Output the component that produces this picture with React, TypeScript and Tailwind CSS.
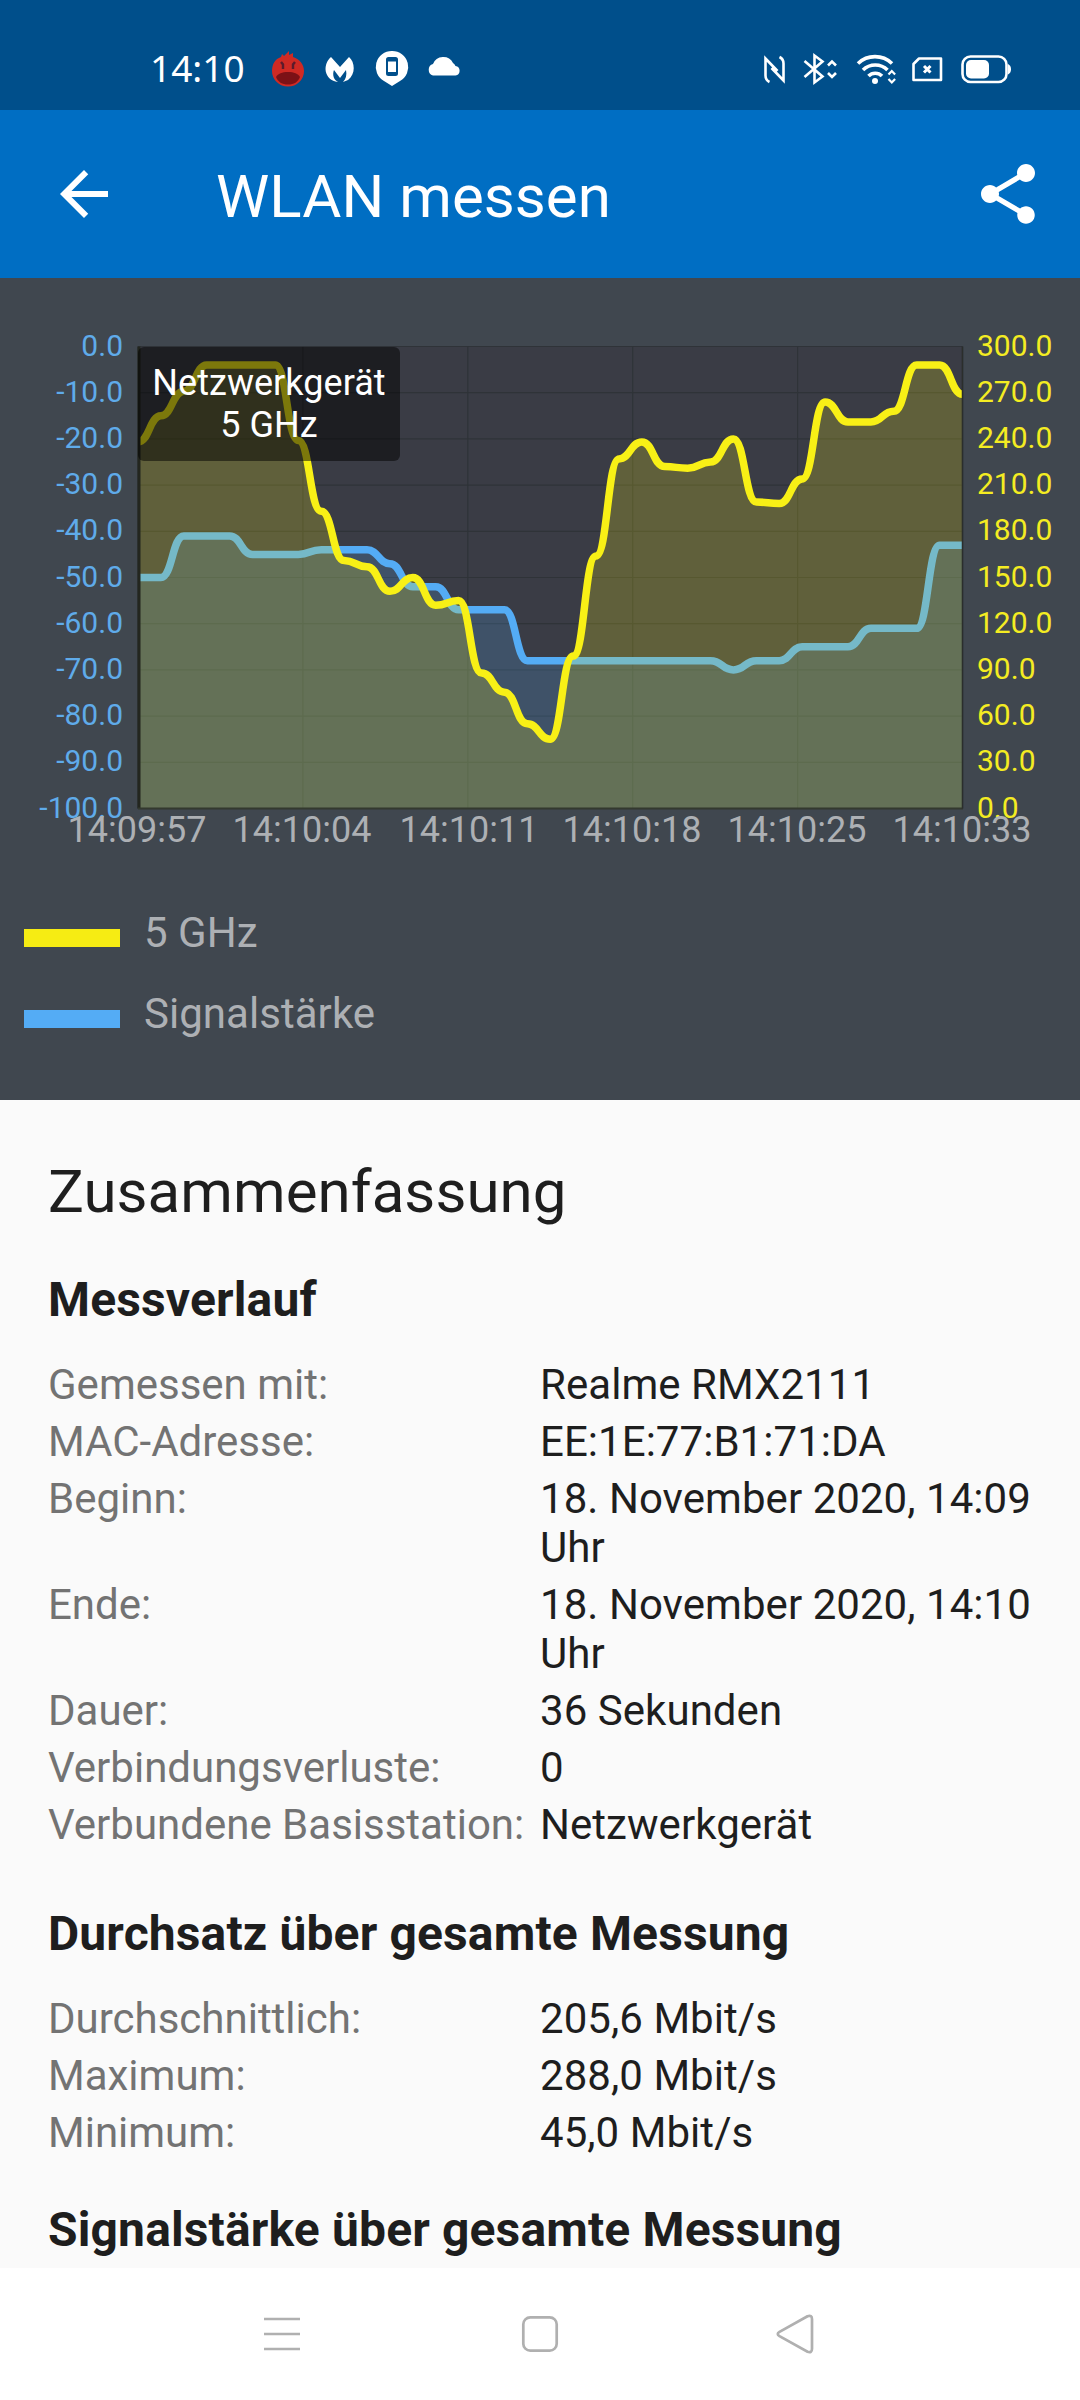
import { MdArrowBack, MdShare } from 'react-icons/md'

// one sample per second
const throughput = [
  238, 255, 271, 288, 288, 288, 288, 239, 193, 161, 157, 141, 150, 132, 135, 88, 75.5, 55, 45,
  99, 164, 227, 238, 222, 221, 225, 240, 199, 198, 214, 264, 251, 251, 258, 288, 288, 269,
]
const signal = [
  -50, -50, -41, -41, -41, -45, -45, -45, -44, -44, -44, -47, -52, -52, -57, -57, -57, -68, -68,
  -68, -68, -68, -68, -68, -68, -68, -70, -68, -68, -65, -65, -65, -61, -61, -61, -43, -43,
]

const times = [
  { label: '14:09:57', x: 137 },
  { label: '14:10:04', x: 302 },
  { label: '14:10:11', x: 469 },
  { label: '14:10:18', x: 632 },
  { label: '14:10:25', x: 797 },
  { label: '14:10:33', x: 962 },
]
const rows = [0, 1, 2, 3, 4, 5, 6, 7, 8, 9, 10]

// plot area inside the chart svg
const LEFT = 138
const RIGHT = 962.5
const TOP = 68.5
const BOTTOM = 530.5

function linePath(values: number[], min: number, max: number) {
  const step = (RIGHT - LEFT) / (values.length - 1)
  const y = (v: number) => BOTTOM - ((v - min) / (max - min)) * (BOTTOM - TOP)
  let d = `M${LEFT} ${y(values[0])}`
  for (let i = 1; i < values.length; i++) {
    const x = LEFT + i * step
    const mid = x - step / 2
    d += `C${mid} ${y(values[i - 1])} ${mid} ${y(values[i])} ${x} ${y(values[i])}`
  }
  return d
}

function Series({ d, color }: { d: string; color: string }) {
  return (
    <g clipPath="url(#plot)">
      <path d={`${d}V${BOTTOM}H${LEFT}Z`} fill={color} fillOpacity="0.2" />
      <path d={d} fill="none" stroke={color} strokeWidth="7.5" />
    </g>
  )
}

function Chart() {
  const rowHeight = (BOTTOM - TOP) / 10
  const colWidth = (RIGHT - LEFT) / 5

  return (
    <div className="relative h-[600px]">
      <svg width="1080" height="600" viewBox="0 0 1080 600" className="block">
        <defs>
          <clipPath id="plot">
            <rect x={LEFT} y={TOP} width={RIGHT - LEFT} height={BOTTOM - TOP} />
          </clipPath>
        </defs>
        <rect x={LEFT} y={TOP} width={RIGHT - LEFT} height={BOTTOM - TOP} fill="#3a3c45" />
        <g stroke="#2f3338" strokeWidth="1.2">
          {rows.map((i) => (
            <line key={i} x1={LEFT} x2={RIGHT} y1={TOP + i * rowHeight} y2={TOP + i * rowHeight} />
          ))}
          {times.map((t, i) => (
            <line key={t.label} y1={TOP} y2={BOTTOM} x1={LEFT + i * colWidth} x2={LEFT + i * colWidth} />
          ))}
        </g>
        <Series d={linePath(signal, -100, 0)} color="#54acf5" />
        <Series d={linePath(throughput, 0, 300)} color="#f8f016" />

        <path d={`M139 ${TOP}V${BOTTOM}`} stroke="#23261f" strokeWidth="3" />
        <path d={`M138 ${BOTTOM}H963`} stroke="#33392f" strokeWidth="2" />
        <path d={`M962.5 ${TOP}V${BOTTOM}`} stroke="#2b2e2c" strokeWidth="1.5" />

        <g fontSize="30">
          {rows.map((i) => (
            <g key={i}>
              <text x="123" y={TOP + i * rowHeight + 9} textAnchor="end" fill="#5fabea">
                {(i === 0 ? 0 : -10 * i).toFixed(1)}
              </text>
              <text x="977" y={TOP + i * rowHeight + 9} fill="#f4ec22">
                {(300 - 30 * i).toFixed(1)}
              </text>
            </g>
          ))}
        </g>
        <g fontSize="36" fill="#adb0b4" textAnchor="middle">
          {times.map((t) => (
            <text key={t.label} x={t.x} y="564">
              {t.label}
            </text>
          ))}
        </g>
      </svg>
      <div className="absolute left-[138px] top-[69px] h-[114px] w-[262px] rounded-md bg-black/50 pt-[15px] text-center text-[36px] leading-[42px] tracking-[0.04px] text-white">
        Netzwerkgerät
        <br />5 GHz
      </div>
    </div>
  )
}

function StatusBar() {
  return (
    <div className="flex h-[110px] items-center bg-[#004f8b] pl-[150px] pt-[28px]">
      <span className="w-[110px] pb-[2px] font-['Noto_Sans',sans-serif] text-[37px] leading-[80px] text-white">14:10</span>
      <svg width="820" height="82" viewBox="260 28 820 82" className="block">
        {/* app notifications */}
        <path
          d="M272 71c0-7 3-12 9-14l1-3 2 2 5-5v4l4-2v4c7 2 11 8 11 14a16 15.500 0 0 1-32 0z"
          fill="#cf2a24"
        />
        <path d="M276 77c2-3.500 6-5 12-5s10 1.500 12 5c-2 5-6 7.500-12 7.500s-10-2.500-12-7.500z" fill="#7c1116" />
        <path d="M281 62l2 2.500V69M295 62l-2 2.500V69" stroke="#5c1b2b" strokeWidth="2.4" fill="none" />
        <path
          d="M331 57l9 10 9-10c6 5 7 17-1 23l-5 2c3-3 4-7 3-12l-6 8-6-8c-2 5 0 10 4 12-14-2-16-17-7-25z"
          fill="#fff"
        />
        <path d="M392 51a16 16 0 0 1 8 30l-8 5-8-5a16 16 0 0 1 8-30z" fill="#fff" />
        <rect x="387" y="58" width="10" height="17" rx="1.5" fill="none" stroke="#004f8b" strokeWidth="2" />
        <path d="M387 60h10M387 73.500h10" stroke="#004f8b" strokeWidth="3" />
        <path
          d="M433 75.500a6 6 0 0 1 0-11.500a11 11 0 0 1 20-1a8 8 0 0 1 2.500 3a4.800 4.800 0 0 1 0 9.500z"
          fill="#fff"
        />

        {/* system icons */}
        <g fill="none" stroke="#fff" strokeWidth="2.600">
          <path d="M769.500 82q-4-2-4-6.500V58.500L777.500 71M779.500 57q4 2 4 6.500V80.500L771.500 68" />
          <path d="M804.500 61l18 15.500-8 6V55.500l8 6L804.500 77" />
          <path d="M828 65.500l4-4 4 4M828 73l4 4 4-4" />
          <path d="M858 63.500a24.500 24.500 0 0 1 34 0M863 70a17.500 17.500 0 0 1 24.500 0M868.500 76a9.500 9.500 0 0 1 13.500 0" strokeWidth="3.600" />
          <path d="M888.500 74.500l3.300-3.500 3.300 3.500M888.500 79l3.300 3.500 3.300-3.500" strokeWidth="2.200" />
          <path d="M919 58.500h22V80h-27.500V64z" strokeLinejoin="round" />
          <path d="M924 66l6.500 6.500M930.500 66l-6.500 6.500" strokeWidth="3" />
          <rect x="962.500" y="56.500" width="44" height="25.500" rx="8" />
        </g>
        <circle cx="875" cy="81" r="3" fill="#fff" />
        <rect x="966" y="60" width="23" height="18.500" rx="5" fill="#fff" />
        <path d="M1008 64q3 1.500 3 5.200t-3 5.200z" fill="#fff" />
      </svg>
    </div>
  )
}

function Section({ title, items }: { title: string; items: string[][] }) {
  return (
    <section>
      <h2 className="pt-px text-[48px] font-bold leading-[56px] tracking-[0.14px]">{title}</h2>
      <dl className="mt-8">
        {items.map(([label, value]) => (
          <div key={label} className="flex pb-2 text-[42px] leading-[49px]">
            <dt className="w-[492px] shrink-0 whitespace-nowrap text-[#737373]">{label}</dt>
            <dd className="flex-1 tracking-[0.05px]">{value}</dd>
          </div>
        ))}
      </dl>
    </section>
  )
}

function LegendItem({ label, color }: { label: string; color: string }) {
  return (
    <div className="flex gap-6">
      <span className={`mt-[21px] h-[18px] w-24 ${color}`} />
      <span>{label}</span>
    </div>
  )
}

const history = [
  ['Gemessen mit:', 'Realme RMX2111'],
  ['MAC-Adresse:', 'EE:1E:77:B1:71:DA'],
  ['Beginn:', '18. November 2020, 14:09 Uhr'],
  ['Ende:', '18. November 2020, 14:10 Uhr'],
  ['Dauer:', '36 Sekunden'],
  ['Verbindungsverluste:', '0'],
  ['Verbundene Basisstation:', 'Netzwerkgerät'],
]

const rates = [
  ['Durchschnittlich:', '205,6 Mbit/s'],
  ['Maximum:', '288,0 Mbit/s'],
  ['Minimum:', '45,0 Mbit/s'],
]

export default function App() {
  return (
    <div className="flex h-[2400px] w-[1080px] flex-col overflow-hidden bg-[#fafafa] font-['Roboto',sans-serif] text-[#1e1e1e]">
      <StatusBar />

      <header className="flex h-[168px] items-center bg-[#006ec3] pl-12 pr-9 text-white">
        <MdArrowBack size={72} />
        <h1 className="ml-24 flex-1 pt-[6px] text-[60px] leading-[70px] tracking-[0.06px]">WLAN messen</h1>
        <MdShare size={72} />
      </header>

      <div className="h-[822px] bg-[#40474f]">
        <Chart />
        <div className="flex flex-col gap-8 pl-6 pt-[30px] text-[42px] leading-[49px] tracking-[0.04px] text-[#adb0b4]">
          <LegendItem label="5 GHz" color="bg-[#f6ec13]" />
          <LegendItem label="Signalstärke" color="bg-[#54acf5]" />
        </div>
      </div>

      <main className="flex-1 overflow-hidden pl-12 pr-9 pt-[57px]">
        <h1 className="mb-11 text-[60px] leading-[70px] tracking-[0.06px]">Zusammenfassung</h1>
        <Section title="Messverlauf" items={history} />
        <div className="h-12" />
        <Section title="Durchsatz über gesamte Messung" items={rates} />
        <div className="h-9" />
        <Section title="Signalstärke über gesamte Messung" items={[]} />
      </main>

      <nav className="flex h-[132px] shrink-0 items-center justify-center gap-[212px] bg-white">
        <svg width="44" height="44" viewBox="2 0 44 44" fill="none" stroke="#b0b0b0" strokeWidth="2.700">
          <path d="M4 7h36M4 22h36M4 37h36" />
        </svg>
        <svg width="44" height="44" viewBox="0 0 44 44" fill="none" stroke="#b0b0b0" strokeWidth="2.700">
          <rect x="5.300" y="5.300" width="33.400" height="33.400" rx="7" />
        </svg>
        <svg width="44" height="44" viewBox="0 0 44 44" fill="none" stroke="#b0b0b0" strokeWidth="2.700">
          <path d="M33.500 4.200L5.500 19.800q-3.500 2.200 0 4.400L33.500 39.800q4.500 1.500 4.500-3V7.200q0-4.500-4.500-3z" />
        </svg>
      </nav>
    </div>
  )
}
